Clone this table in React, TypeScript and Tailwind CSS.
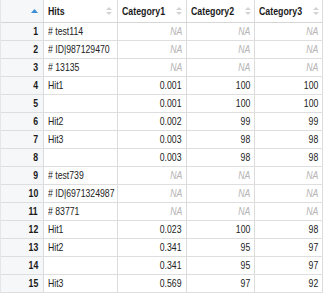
import React from "react";

type Row = [string, string, string | null, string | null, string | null];

const rows: Row[] = [
  ["1", "# test114", null, null, null],
  ["2", "# ID|987129470", null, null, null],
  ["3", "# 13135", null, null, null],
  ["4", "Hit1", "0.001", "100", "100"],
  ["5", "", "0.001", "100", "100"],
  ["6", "Hit2", "0.002", "99", "99"],
  ["7", "Hit3", "0.003", "98", "98"],
  ["8", "", "0.003", "98", "98"],
  ["9", "# test739", null, null, null],
  ["10", "# ID|6971324987", null, null, null],
  ["11", "# 83771", null, null, null],
  ["12", "Hit1", "0.023", "100", "98"],
  ["13", "Hit2", "0.341", "95", "97"],
  ["14", "", "0.341", "95", "97"],
  ["15", "Hit3", "0.569", "97", "92"],
];

const SortIcon = () => (
  <svg width="6" height="8" viewBox="0 0 6 8" className="shrink-0">
    <path d="M3 0 L6 3 L0 3 Z" fill="#d3d3d3" />
    <path d="M0 5 L6 5 L3 8 Z" fill="#d3d3d3" />
  </svg>
);

const Num = ({ v }: { v: string | null }) =>
  v === null ? (
    <span className="inline-block origin-right scale-x-[0.79] italic text-[#b4b4b4]">NA</span>
  ) : (
    <span className="inline-block origin-right scale-x-[0.79] text-[#222]">{v}</span>
  );

export default function App() {
  const font = {
    fontFamily: '"Liberation Sans", Arial, sans-serif',
  };
  return (
    <div className="w-[328px] h-[296px] bg-white text-[11px]" style={font}>
      <div className="w-[323px] border-l border-[#e6e6e6]">
        <div className="grid grid-cols-[43px_74px_69px_68px_68px] h-[23px] border-b border-[#d6d6d6]">
          <div className="bg-[#f5f7f9] border-r border-[#dcdcdc] flex items-center justify-end pr-[5px]">
            <svg width="7" height="4" viewBox="0 0 7 4">
              <path d="M3.5 0 L7 4 L0 4 Z" fill="#3a8fd6" />
            </svg>
          </div>
          {["Hits", "Category1", "Category2", "Category3"].map((h) => (
            <div
              key={h}
              className="border-r border-[#dcdcdc] flex items-center justify-between pl-[4px] pr-[5px] font-bold text-[#1a1a1a]"
            >
              <span className="inline-block origin-left scale-x-[0.8] whitespace-nowrap">{h}</span>
              <SortIcon />
            </div>
          ))}
        </div>
        {rows.map((r) => (
          <div
            key={r[0]}
            className="grid grid-cols-[43px_74px_69px_68px_68px] h-[18px] border-b border-[#dedede]"
          >
            <div className="bg-[#f5f7f9] border-r border-[#dcdcdc] flex items-center justify-end pr-[5px] font-bold text-[#1a1a1a]">
              <span className="inline-block origin-right scale-x-[0.79]">{r[0]}</span>
            </div>
            <div className="border-r border-[#dcdcdc] flex items-center pl-[4px] text-[#222] whitespace-nowrap">
              <span className="inline-block origin-left scale-x-[0.79]">{r[1]}</span>
            </div>
            <div className="border-r border-[#dcdcdc] flex items-center justify-end pr-[4px]">
              <Num v={r[2]} />
            </div>
            <div className="border-r border-[#dcdcdc] flex items-center justify-end pr-[4px]">
              <Num v={r[3]} />
            </div>
            <div className="border-r border-[#dcdcdc] flex items-center justify-end pr-[4px]">
              <Num v={r[4]} />
            </div>
          </div>
        ))}
      </div>
    </div>
  );
}
